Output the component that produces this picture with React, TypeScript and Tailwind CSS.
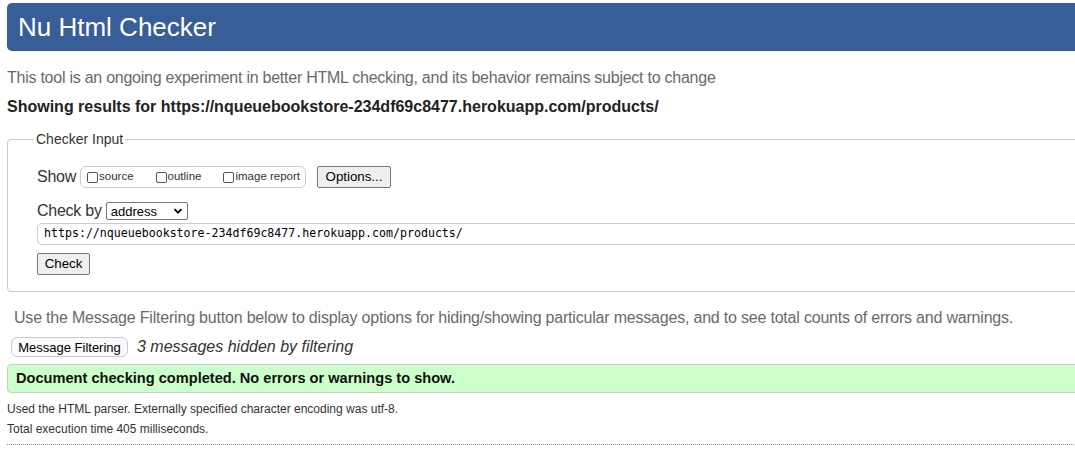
import React from "react";

function Box() {
  return <span className="inline-block w-[11px] h-[11px] border border-[#555] rounded-[2px] bg-white shrink-0" />;
}

export default function App() {
  return (
    <div className="w-[1075px] h-[452px] overflow-hidden bg-white font-['Liberation_Sans',Arial,sans-serif]">
      <div className="w-[1140px] pl-[7px] pt-[3px]">
        <header className="h-[48px] rounded-l-[5px] bg-[#375e97] flex items-center pl-[11px]">
          <h1 className="text-white text-[26px] leading-none font-normal">Nu Html Checker</h1>
        </header>

        <p className="mt-[17px] h-[20px] leading-[20px] text-[16px] text-[#6a6a6a] tracking-[-0.25px]">
          This tool is an ongoing experiment in better HTML checking, and its behavior remains subject to change
        </p>
        <p className="mt-[9px] h-[20px] leading-[20px] text-[16px] font-bold text-[#222]">
          Showing results for https://nqueuebookstore-234df69c8477.herokuapp.com/products/
        </p>

        <fieldset className="mt-[14px] border border-[#ccc] rounded-[4px] pl-[29px] pb-[16px]">
          <legend className="-ml-[3px] px-[2px] text-[14px] leading-[16px] text-[#333]">Checker Input</legend>
          <div className="pt-[19px] flex items-center h-[41px] text-[#333]">
            <span className="text-[16px] tracking-[-0.25px] leading-none">Show</span>
            <div className="ml-[4px] h-[22px] border border-[#ccc] rounded-[6px] flex items-center pl-[6px] pr-[5px] gap-[22px]">
              <label className="flex items-center gap-[1px] text-[11.5px] leading-none">
                <Box />
                source
              </label>
              <label className="flex items-center gap-[1px] text-[11.5px] leading-none">
                <Box />
                outline
              </label>
              <label className="flex items-center gap-[1px] text-[11.5px] leading-none">
                <Box />
                image report
              </label>
            </div>
            <button className="ml-[11px] w-[74px] h-[22px] bg-[#efefef] border border-[#767676] rounded-[2px] text-[13.3px] text-black leading-none flex items-center justify-center">
              Options...
            </button>
          </div>

          <div className="mt-[12px] h-[22px] flex items-center text-[#333]">
            <span className="text-[16px] tracking-[-0.25px] leading-none">Check by</span>
            <div className="ml-[4px] w-[82px] h-[18px] border border-[#767676] rounded-[2px] flex items-center justify-between pl-[4px] pr-[4px] bg-white">
              <span className="text-[13px] leading-none text-black">address</span>
              <svg width="10" height="10" viewBox="0 0 10 10" className="shrink-0">
                <path d="M1.5 3.2 L5 6.7 L8.5 3.2" fill="none" stroke="#000" strokeWidth="1.8" />
              </svg>
            </div>
          </div>

          <div className="mt-[1px] h-[22px] border border-[#ccc] rounded-l-[5px] flex items-center pl-[6px] bg-white">
            <span className="font-['DejaVu_Sans_Mono',monospace] text-[11.6px] leading-none text-black">
              https://nqueuebookstore-234df69c8477.herokuapp.com/products/
            </span>
          </div>

          <button className="mt-[8px] w-[53px] h-[22px] bg-[#efefef] border border-[#767676] rounded-[2px] text-[13.3px] text-black leading-none flex items-center justify-center">
            Check
          </button>
        </fieldset>

        <p className="mt-[16px] pl-[7px] h-[20px] leading-[20px] text-[16px] text-[#6a6a6a] tracking-[-0.2px]">
          Use the Message Filtering button below to display options for hiding/showing particular messages, and to see total counts of errors and warnings.
        </p>

        <div className="mt-[9px] flex items-center h-[20px]">
          <button className="ml-[4px] h-[20px] w-[117px] border border-[#ccc] rounded-[6px] bg-[#fafafa] text-[13px] leading-none text-black flex items-center justify-center">
            Message Filtering
          </button>
          <span className="ml-[9px] text-[16px] italic text-[#333] leading-none">3 messages hidden by filtering</span>
        </div>

        <div className="mt-[7px] h-[29px] border border-[#ccc] rounded-l-[4px] bg-[#ccffcc] flex items-center pl-[8px]">
          <span className="text-[14.6px] font-bold text-[#111] leading-none">
            Document checking completed. No errors or warnings to show.
          </span>
        </div>

        <p className="mt-[8px] h-[16px] leading-[16px] text-[12px] text-[#333]">
          Used the HTML parser. Externally specified character encoding was utf-8.
        </p>
        <p className="mt-[4px] h-[16px] leading-[16px] text-[12px] text-[#333]">
          Total execution time 405 milliseconds.
        </p>
        <div className="mt-[7px] border-t border-dotted border-[#888]" />
      </div>
    </div>
  );
}
